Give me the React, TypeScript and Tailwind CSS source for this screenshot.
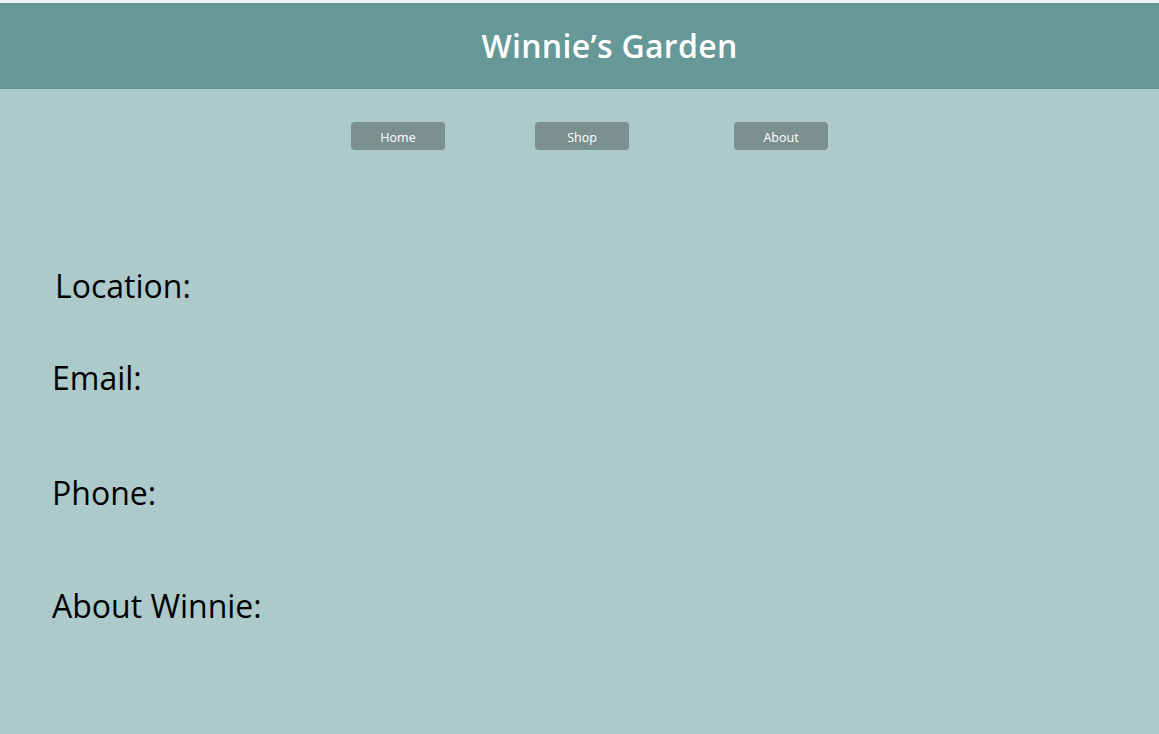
import React from "react";

export default function App() {
  const font = { fontFamily: '"Open Sans", "Noto Sans", sans-serif' };
  return (
    <div className="w-[1159px] h-[734px] overflow-hidden bg-[#adcacb] flex flex-col" style={font}>
      <div className="h-[3px] bg-[#eef3f3]" />
      <header className="h-[86px] bg-[#659896] flex items-center justify-center pl-[60px]">
        <h1 className="text-[32px] font-semibold text-white leading-none tracking-[0.3px]">Winnie’s Garden</h1>
      </header>
      <nav className="mt-[33px] flex">
        <button className="ml-[351px] w-[94px] h-[28px] rounded-[4px] bg-[#7a908f] text-white text-[12.5px] pt-[4px]">Home</button>
        <button className="ml-[90px] w-[94px] h-[28px] rounded-[4px] bg-[#7a908f] text-white text-[12.5px] pt-[4px]">Shop</button>
        <button className="ml-[105px] w-[94px] h-[28px] rounded-[4px] bg-[#7a908f] text-white text-[12.5px] pt-[4px]">About</button>
      </nav>
      <div className="flex flex-col text-black text-[32px] leading-none">
        <div className="mt-[120px] ml-[55px]">Location:</div>
        <div className="mt-[60px] ml-[52px]">Email:</div>
        <div className="mt-[83px] ml-[52px]">Phone:</div>
        <div className="mt-[81px] ml-[52px]">About Winnie:</div>
      </div>
    </div>
  );
}
